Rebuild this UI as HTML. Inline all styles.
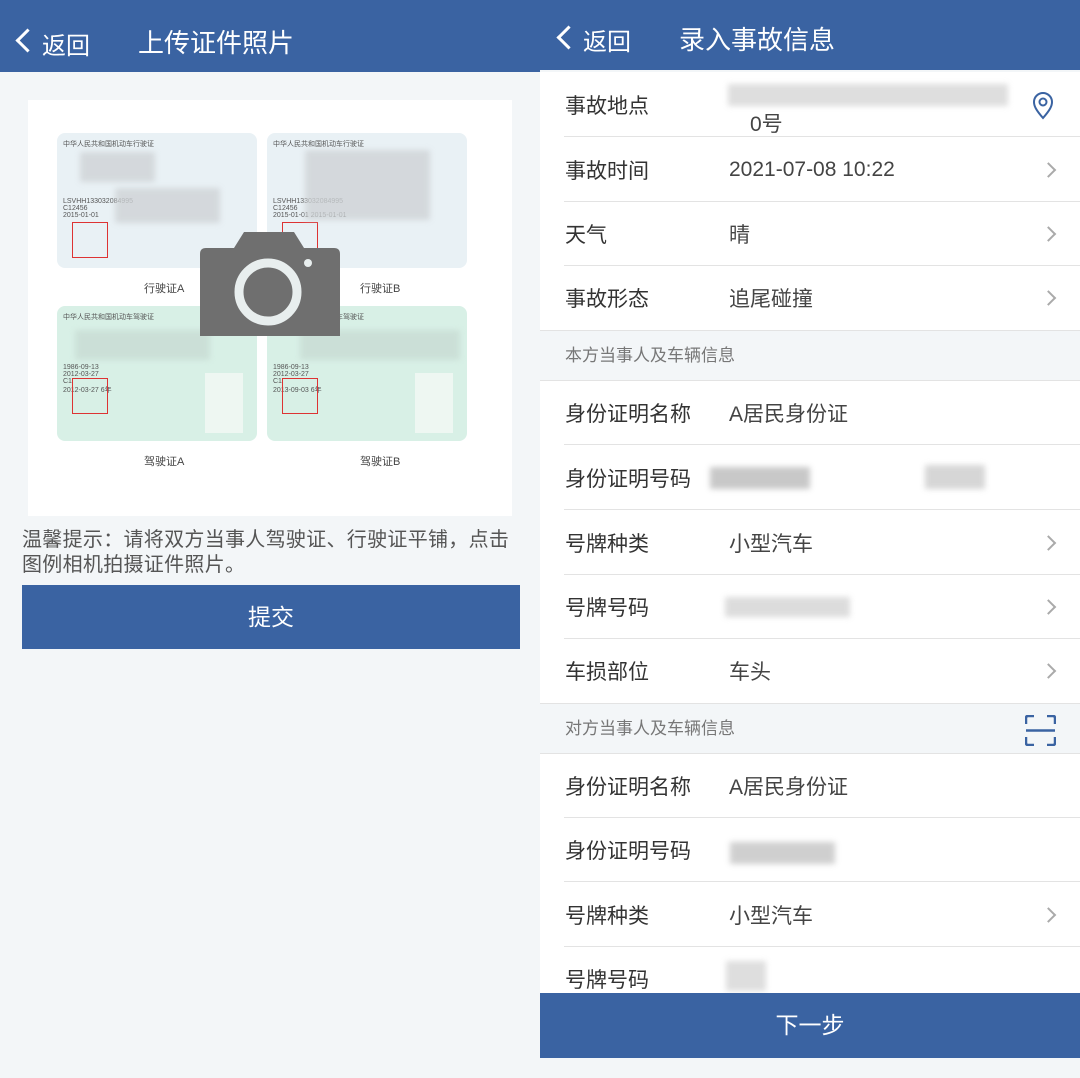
<!DOCTYPE html>
<html><head><meta charset="utf-8"><style>
*{margin:0;padding:0;box-sizing:border-box}
body{width:1080px;height:1078px;overflow:hidden;background:#f3f6f8;font-family:"Liberation Sans","Noto Sans CJK SC",sans-serif;position:relative}
.a{position:absolute}
.hdr{background:#3a63a2;color:#fff}
.lbl{position:absolute;left:25px;font-size:21px;color:#333}
.val{position:absolute;left:189px;font-size:21px;color:#444}
.row{position:absolute;left:0;width:540px;height:64px;background:#fff}
.row .line{position:absolute;left:24px;right:0;bottom:0;height:1px;background:#e3e3e3}
.row .lbl,.row .val{top:50%;transform:translateY(-50%)}
.chev{position:absolute;right:26px;top:50%;width:11px;height:11px;border-right:2px solid #aaa;border-top:2px solid #aaa;transform:translateY(-50%) rotate(45deg)}
.sec{position:absolute;left:0;width:540px;height:51px;background:#f3f6f8;border-top:1px solid #e3e3e3;border-bottom:1px solid #e3e3e3;font-size:17px;color:#777;padding-left:25px;line-height:50px}
.card{position:absolute;border-radius:8px;font-size:7px;color:#555;padding:6px}
.blur{position:absolute;background:#cfd3d6;opacity:.8;filter:blur(3px)}
.cap{position:absolute;font-size:11px;color:#444}
.back{position:absolute;width:17px;height:17px;border-left:3px solid #fff;border-bottom:3px solid #fff;transform:rotate(45deg)}
</style></head><body>
<!-- LEFT -->
<div class="a hdr" style="left:0;top:0;width:540px;height:72px">
 <div class="back" style="left:19px;top:32px"></div>
 <div class="a" style="left:42px;top:26px;font-size:24px">返回</div>
 <div class="a" style="left:138px;top:23px;font-size:26px">上传证件照片</div>
</div>
<div class="a" style="left:28px;top:100px;width:484px;height:416px;background:#fff"></div>
<div class="card" style="left:57px;top:133px;width:200px;height:135px;background:#e9f1f5">中华人民共和国机动车行驶证<br><br><br><br><br><br><br><br>LSVHH133032084995<br>C12456<br>2015-01-01</div>
<div class="card" style="left:267px;top:133px;width:200px;height:135px;background:#e9f1f5">中华人民共和国机动车行驶证<br><br><br><br><br><br><br><br>LSVHH133032084995<br>C12456<br>2015-01-01 2015-01-01</div>
<div class="card" style="left:57px;top:306px;width:200px;height:135px;background:#d8f0e6">中华人民共和国机动车驾驶证<br><br><br><br><br><br><br>1986-09-13<br>2012-03-27<br>C1<br>2012-03-27 6年</div>
<div class="card" style="left:267px;top:306px;width:200px;height:135px;background:#d8f0e6">中华人民共和国机动车驾驶证<br><br><br><br><br><br><br>1986-09-13<br>2012-03-27<br>C1<br>2013-09-03 6年</div>
<div class="a" style="left:72px;top:222px;width:36px;height:36px;border:1px solid #d33"></div>
<div class="a" style="left:282px;top:222px;width:36px;height:36px;border:1px solid #d33"></div>
<div class="a" style="left:72px;top:378px;width:36px;height:36px;border:1px solid #d33"></div>
<div class="a" style="left:282px;top:378px;width:36px;height:36px;border:1px solid #d33"></div>
<div class="a" style="left:205px;top:373px;width:38px;height:60px;background:#eef7f2"></div>
<div class="a" style="left:415px;top:373px;width:38px;height:60px;background:#eef7f2"></div>
<div class="blur" style="left:80px;top:152px;width:75px;height:30px"></div>
<div class="blur" style="left:115px;top:188px;width:105px;height:35px"></div>
<div class="blur" style="left:305px;top:150px;width:125px;height:70px"></div>
<div class="blur" style="left:75px;top:330px;width:135px;height:30px;background:#c8dcd4"></div>
<div class="blur" style="left:300px;top:330px;width:160px;height:30px;background:#c8dcd4"></div>
<div class="cap" style="left:144px;top:280px">行驶证A</div>
<div class="cap" style="left:360px;top:280px">行驶证B</div>
<div class="cap" style="left:144px;top:453px">驾驶证A</div>
<div class="cap" style="left:360px;top:453px">驾驶证B</div>
<svg class="a" style="left:200px;top:232px" width="140" height="104" viewBox="0 0 140 104">
 <path d="M0 22 Q0 16 6 16 L34 16 L44 0 L94 0 L104 16 L134 16 Q140 16 140 22 L140 104 L0 104 Z" fill="#6f6f6f"/>
 <circle cx="68" cy="60" r="29" fill="none" stroke="#e8eeee" stroke-width="9"/>
 <circle cx="108" cy="31" r="4" fill="#e8eeee"/>
</svg>
<div class="a" style="left:22px;top:528px;width:500px;font-size:20px;color:#555;line-height:25px;letter-spacing:0.3px">温馨提示：请将双方当事人驾驶证、行驶证平铺，点击<br>图例相机拍摄证件照片。</div>
<div class="a" style="left:22px;top:585px;width:498px;height:64px;background:#3a63a2;color:#fff;font-size:23px;text-align:center;line-height:64px">提交</div>

<!-- RIGHT -->
<div class="a" style="left:540px;top:0;width:540px;height:1078px;overflow:hidden">
 <div class="a hdr" style="left:0;top:0;width:540px;height:70px">
  <div class="back" style="left:20px;top:29px"></div>
  <div class="a" style="left:43px;top:22px;font-size:24px">返回</div>
  <div class="a" style="left:139px;top:20px;font-size:26px">录入事故信息</div>
 </div>
 <div class="row" style="top:72px;height:65px"><div class="lbl">事故地点</div><div class="val" style="top:36px;left:210px">　　　　　　　　　　　<br>0号</div><div class="blur" style="left:188px;top:12px;width:280px;height:22px;background:#d6d6d6"></div>
  <svg class="a" style="right:26px;top:20px" width="22" height="28" viewBox="0 0 22 28"><path d="M11 26 C4 18 2 14 2 10 A9 9 0 0 1 20 10 C20 14 18 18 11 26Z" fill="none" stroke="#3a63a2" stroke-width="2"/><circle cx="11" cy="10" r="3.5" fill="none" stroke="#3a63a2" stroke-width="2"/></svg><div class="line"></div></div>
 <div class="row" style="top:137px;height:65px"><div class="lbl">事故时间</div><div class="val">2021-07-08 10:22</div><div class="chev"></div><div class="line"></div></div>
 <div class="row" style="top:202px"><div class="lbl">天气</div><div class="val">晴</div><div class="chev"></div><div class="line"></div></div>
 <div class="row" style="top:266px"><div class="lbl">事故形态</div><div class="val">追尾碰撞</div><div class="chev"></div></div>
 <div class="sec" style="top:330px">本方当事人及车辆信息</div>
 <div class="row" style="top:381px"><div class="lbl">身份证明名称</div><div class="val">A居民身份证</div><div class="line"></div></div>
 <div class="row" style="top:445px;height:65px"><div class="lbl">身份证明号码</div><div class="blur" style="left:170px;top:22px;width:100px;height:22px;background:#bbb"></div><div class="blur" style="left:385px;top:20px;width:60px;height:24px;background:#ccc"></div><div class="line"></div></div>
 <div class="row" style="top:510px;height:65px"><div class="lbl">号牌种类</div><div class="val">小型汽车</div><div class="chev"></div><div class="line"></div></div>
 <div class="row" style="top:575px"><div class="lbl">号牌号码</div><div class="blur" style="left:185px;top:22px;width:125px;height:20px;background:#d4d4d4"></div><div class="chev"></div><div class="line"></div></div>
 <div class="row" style="top:639px"><div class="lbl">车损部位</div><div class="val">车头</div><div class="chev"></div></div>
 <div class="sec" style="top:703px">对方当事人及车辆信息
  <svg class="a" style="right:24px;top:11px" width="31" height="31" viewBox="0 0 31 31" fill="none" stroke="#3a63a2" stroke-width="2.5"><path d="M1 9V3Q1 1 3 1H9M22 1H28Q30 1 30 3V9M30 22V28Q30 30 28 30H22M9 30H3Q1 30 1 28V22M1 15.5H30"/></svg></div>
 <div class="row" style="top:754px"><div class="lbl">身份证明名称</div><div class="val">A居民身份证</div><div class="line"></div></div>
 <div class="row" style="top:818px"><div class="lbl">身份证明号码</div><div class="blur" style="left:190px;top:24px;width:105px;height:22px;background:#c4c4c4"></div><div class="line"></div></div>
 <div class="row" style="top:882px;height:65px"><div class="lbl">号牌种类</div><div class="val">小型汽车</div><div class="chev"></div><div class="line"></div></div>
 <div class="row" style="top:947px;height:46px"><div class="lbl" style="top:32px">号牌号码</div><div class="blur" style="left:186px;top:14px;width:40px;height:30px;background:#d6d6d6"></div></div>
 <div class="a" style="left:0;top:993px;width:540px;height:65px;background:#3a63a2;color:#fff;font-size:23px;text-align:center;line-height:65px">下一步</div>
</div>
</body></html>
